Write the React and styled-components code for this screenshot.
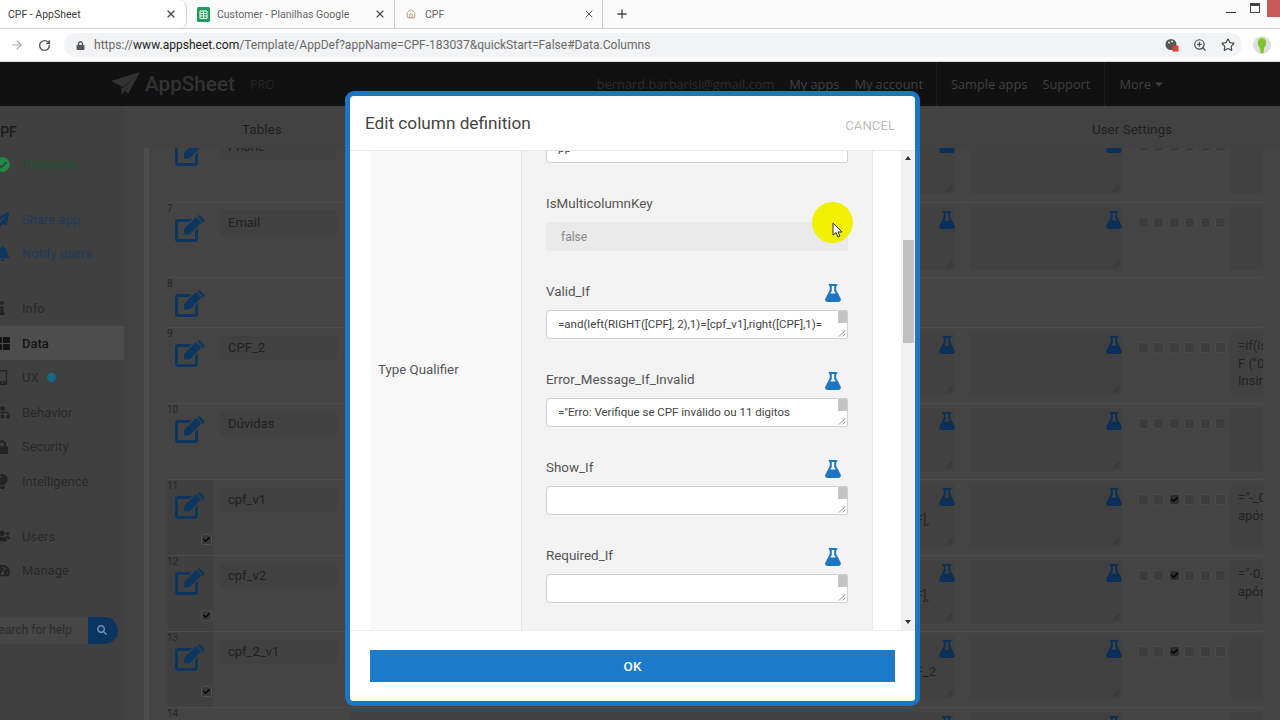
import React from 'react';
import styled, { createGlobalStyle } from 'styled-components';
import { ArrowRight, RotateCw, Star, ZoomIn, Home, X, Plus } from 'lucide-react';
import {
  FaCheckCircle, FaPaperPlane, FaBell, FaInfo, FaThLarge, FaMobileAlt, FaSitemap,
  FaLock, FaLightbulb, FaUsers, FaTachometerAlt, FaSearch, FaCheck, FaCaretDown,
} from 'react-icons/fa';

const Global = createGlobalStyle`
  html, body { margin: 0; padding: 0; background: #424242; }
  * { box-sizing: border-box; }
  body { font-family: Roboto, "Liberation Sans", sans-serif; }
`;

const Screen = styled.div`
  position: relative;
  width: 1280px;
  height: 720px;
  overflow: hidden;
  display: flex;
  flex-direction: column;
  background: #424242;
`;

/* Browser chrome */
const TabStrip = styled.div`
  height: 29px;
  display: flex;
  align-items: stretch;
  background: #fbfbfb;
  border-bottom: 1px solid #cfcfcf;
  flex: none;
`;
const Tab = styled.div`
  width: ${p => p.$width}px;
  display: flex;
  align-items: center;
  gap: ${p => p.$gap || 7}px;
  padding: 0 ${p => p.$padRight}px 0 ${p => p.$padLeft}px;
  font-size: 10.5px;
  color: ${p => (p.$active ? '#3c3c3c' : '#666')};
  position: relative;
  background: ${p => (p.$active ? '#fff' : 'transparent')};
  border-right: 1px solid ${p => (p.$active ? '#cfcfcf' : '#c8c8c8')};
  border-bottom-right-radius: ${p => (p.$active ? '6px' : '0')};
  border-top-right-radius: ${p => (p.$active ? '8px' : '0')};
`;
const TabTitle = styled.span`
  flex: 1;
  white-space: nowrap;
`;
const NewTab = styled.div`
  display: flex;
  align-items: center;
  margin-left: 12px;
  color: #444;
`;
const WindowControls = styled.div`
  margin-left: auto;
  display: flex;
  align-items: flex-start;
`;
const WinMin = styled.span`
  width: 10px;
  height: 1px;
  margin: 12px 14px 0 0;
  background: #333;
`;
const WinRestore = styled.span`
  width: 10px;
  height: 10px;
  margin: 3px 7px 0 0;
  border: 1px solid #444;
  border-top-width: 3px;
  background: #fff;
`;
const WinClose = styled.span`
  width: 13px;
  height: 17px;
  background: #c9585a;
`;

const AddressBar = styled.div`
  height: 33px;
  display: flex;
  align-items: center;
  background: #fff;
  border-bottom: 1px solid #d8d8d8;
  flex: none;
  padding-left: 10px;
  color: #666;
`;
const ReloadBox = styled.span`
  display: flex;
  margin: 0 13px 0 14px;
  color: #555;
`;
const Omnibox = styled.div`
  width: 1178px;
  height: 24px;
  display: flex;
  align-items: center;
  border-radius: 12px;
  background: #f1f3f4;
  padding: 0 7px 0 12px;
  color: #555;
`;
const Url = styled.span`
  margin-left: 9px;
  font-size: 12.05px;
  color: #6a6a6a;
  white-space: nowrap;
  flex: 1;
  b { font-weight: 400; color: #222; }
`;
const OmniIcons = styled.div`
  display: flex;
  align-items: center;
  gap: 14px;
  color: #444;
`;
const Avatar = styled.svg`
  margin-left: 11px;
  flex: none;
`;

/* App shell */
const TopBar = styled.header`
  height: 44px;
  flex: none;
  display: flex;
  align-items: center;
  background: #111;
  padding-left: 111px;
  font-family: "Open Sans", sans-serif;
  font-size: 12.8px;
  color: #3c3c3c;
`;
const Brand = styled.span`
  font-family: Roboto, sans-serif;
  font-size: 20.7px;
  font-weight: 500;
  color: #333;
  margin-left: 5px;
`;
const Pro = styled.span`
  font-size: 12.5px;
  color: #262626;
  margin-left: 15px;
  margin-right: 322px;
`;
const NavLink = styled.span`
  margin-left: ${p => p.$gap ?? 15}px;
  white-space: nowrap;
  color: ${p => (p.$light ? '#2c2c2c' : '#414141')};
`;
const NavGroup = styled.div`
  height: 100%;
  display: flex;
  align-items: center;
  padding: 0 14px;
  margin-left: ${p => p.$offset ?? 13}px;
  border-left: 1px solid #1e1e1e;
`;
const Caret = styled.span`
  display: inline-flex;
  vertical-align: -1px;
  margin-left: 2px;
`;

const Body = styled.div`
  flex: 1;
  min-height: 0;
  display: flex;
`;
const Sidebar = styled.nav`
  width: 124px;
  flex: none;
  background: #404040;
  overflow: hidden;
  font-size: 13px;
`;
const AppName = styled.div`
  height: 50px;
  margin-left: -9px;
  display: flex;
  align-items: center;
  font-size: 14px;
  font-weight: 500;
  color: #1c1c1c;
  padding-top: 1px;
`;
const SideItem = styled.div`
  height: ${p => p.$h || 34.6}px;
  display: flex;
  align-items: center;
  margin-bottom: ${p => p.$after || 0}px;
  padding-left: 22px;
  position: relative;
  color: ${p => p.$color || '#282828'};
  background: ${p => (p.$active ? '#4d4d4d' : 'transparent')};
  font-weight: ${p => (p.$active ? 500 : 400)};
`;
const SideIcon = styled.span`
  position: absolute;
  left: -8px;
  width: 20px;
  display: flex;
  justify-content: center;
  color: ${p => p.$color || '#232323'};
`;
const Dot = styled.span`
  width: 9px;
  height: 9px;
  border-radius: 50%;
  background: #14688c;
  margin-left: 8px;
`;
const SearchBox = styled.div`
  height: 27px;
  width: 118px;
  margin-top: 29px;
  display: flex;
  align-items: stretch;
  border-radius: 0 14px 14px 0;
  overflow: hidden;
  background: #464646;
`;
const SearchText = styled.span`
  flex: 1;
  min-width: 0;
  font-size: 12px;
  line-height: 27px;
  color: #2b2b2b;
  white-space: nowrap;
  overflow: hidden;
  display: flex;
  justify-content: flex-end;
  padding-right: 16px;
`;
const SearchBtn = styled.span`
  width: 30px;
  flex: none;
  background: #0a3560;
  color: #6d8db0;
  display: flex;
  align-items: center;
  padding-left: 9px;
`;

const Main = styled.main`
  flex: 1;
  min-width: 0;
  display: flex;
  flex-direction: column;
`;
const ColumnHeads = styled.div`
  height: 42px;
  flex: none;
  display: flex;
  align-items: center;
  justify-content: space-between;
  padding: 8px 108px 4px 118px;
  font-size: 13.5px;
  color: #1f1f1f;
`;
const Panel = styled.div`
  flex: 1;
  min-height: 0;
  overflow: hidden;
  margin-left: 20px;
  padding-left: 18px;
  border-left: 5px solid #4d4d4d;
  background: #444;
`;
const RowList = styled.div`
  width: 1096px;
  margin-top: -22px;
`;
const Row = styled.div`
  height: ${p => p.$h}px;
  display: grid;
  grid-template-columns: 53px 117px 618px 15px 152px 108px 33px;
  align-items: start;
  border-top: 1px solid #4b4b4b;
`;
const IndexCell = styled.div`
  width: 46px;
  height: 100%;
  padding-top: 1px;
  background: ${p => (p.$selected ? '#404040' : 'transparent')};
  font-size: 10px;
  line-height: 10px;
  color: #262626;
  display: flex;
  flex-direction: column;
`;
const EditGlyph = styled.svg`
  margin: 1px 0 0 8px;
  color: #0c3560;
  flex: none;
`;
const RowCheck = styled.span`
  width: 11px;
  height: 11px;
  margin: 15px 0 0 34px;
  border-radius: 2px;
  background: #3a3a3a;
  border: 1px solid #505050;
  color: #000;
  display: flex;
  align-items: center;
  justify-content: center;
`;
const NameField = styled.div`
  height: 25px;
  margin-top: 7px;
  padding-left: 8px;
  border-radius: 3px;
  background: #414141;
  font-size: 13px;
  line-height: 25px;
  color: #202020;
`;
const Formula = styled.div`
  position: relative;
  height: 63px;
  margin: 4px 0 0 13px;
  padding: 27px ${p => p.$trail ?? 26}px 0 0;
  background: #414141;
  text-align: right;
  font-size: 13px;
  line-height: 17px;
  color: #222;
`;
const ScrollPad = styled.div`
  position: relative;
  height: 63px;
  margin-top: 4px;
  background: #414141;
`;
const FlaskSpot = styled.span`
  position: absolute;
  top: 4px;
  right: 0;
  display: flex;
  color: #0a3058;
`;
const Grip = styled.svg`
  position: absolute;
  right: 2px;
  bottom: 2px;
  color: #2c2c2c;
`;
const Checks = styled.div`
  display: flex;
  gap: 4.4px;
  margin-top: 14px;
  padding-left: 16px;
`;
const Box = styled.span`
  width: 11px;
  height: 11px;
  border-radius: 3px;
  background: ${p => (p.$on ? '#2c2c2c' : '#3c3c3c')};
  border: 1px solid #4a4a4a;
  color: #000;
  display: flex;
  align-items: center;
  justify-content: center;
`;
const InitCell = styled.div`
  height: 63px;
  margin-top: 4px;
  padding: 5px 0 0 8px;
  background: #414141;
  font-size: 13px;
  line-height: 17.5px;
  color: #222;
  overflow: hidden;
  white-space: nowrap;
`;

/* Modal */
const Modal = styled.section`
  position: absolute;
  left: 345px;
  top: 91px;
  width: 575px;
  height: 615px;
  background: #fff;
  border: 5px solid #1c75c5;
  border-radius: 9px;
  display: flex;
  flex-direction: column;
  overflow: hidden;
`;
const ModalHead = styled.div`
  height: 55px;
  flex: none;
  display: flex;
  align-items: center;
  justify-content: space-between;
  padding: 0 20px 0 15px;
  border-bottom: 1px solid #e6e6e6;
`;
const ModalTitle = styled.h2`
  margin: 0;
  font-size: 17.2px;
  font-weight: 400;
  color: #444;
`;
const Cancel = styled.span`
  font-size: 13.2px;
  color: #bdbdbd;
  padding-top: 4px;
`;
const ModalBody = styled.div`
  flex: 1;
  min-height: 0;
  display: grid;
  grid-template-columns: 21px 150px 352px 28px 14px;
`;
const Blank = styled.div`
  background: #fff;
`;
const LabelCol = styled.div`
  background: #f8f8f8;
  display: flex;
  align-items: center;
  padding: 0 0 42px 7px;
  font-size: 13.3px;
  color: #555;
`;
const FormCol = styled.div`
  background: #f3f3f3;
  border-left: 1px solid #e7e7e7;
  border-right: 1px solid #e7e7e7;
  overflow: hidden;
  padding: 0 24px;
`;
const FieldStack = styled.div`
  margin-top: -17px;
  display: flex;
  flex-direction: column;
  gap: 30px;
`;
const Field = styled.div`
  display: flex;
  flex-direction: column;
  gap: 9px;
`;
const FieldLabel = styled.div`
  height: 20px;
  display: flex;
  align-items: center;
  justify-content: space-between;
  padding-right: 7px;
  font-size: 13.4px;
  color: #555;
`;
const TestFlask = styled.span`
  display: flex;
  color: #1c75c5;
  margin-top: 4px;
`;
const InputBox = styled.div`
  position: relative;
  height: 29px;
  border-radius: 4px ${p => (p.$disabled ? 0 : 2)}px ${p => (p.$disabled ? 0 : 2)}px 4px;
  border: 1px solid ${p => (p.$disabled ? 'transparent' : '#cfcfcf')};
  background: ${p => (p.$disabled ? '#eaeaea' : '#fff')};
  padding-left: ${p => (p.$disabled ? 14 : 11)}px;
  font-size: ${p => (p.$disabled ? 12 : 11.5)}px;
  line-height: ${p => (p.$disabled ? 29 : 27)}px;
  color: ${p => (p.$disabled ? '#888' : '#444')};
  white-space: nowrap;
  overflow: hidden;
`;
const BoxScroll = styled.span`
  position: absolute;
  top: 0;
  right: 0;
  width: 9px;
  height: 12px;
  background: #c4c4c4;
`;
const BoxGrip = styled.svg`
  position: absolute;
  right: 1px;
  bottom: 1px;
  color: #777;
`;
const Track = styled.div`
  background: #f1f1f1;
  display: flex;
  flex-direction: column;
  align-items: center;
  padding-top: 5px;
`;
const ArrowUp = styled.span`
  width: 0;
  height: 0;
  border-left: 3.5px solid transparent;
  border-right: 3.5px solid transparent;
  border-bottom: 4px solid #333;
`;
const ArrowDown = styled.span`
  width: 0;
  height: 0;
  margin-top: auto;
  margin-bottom: 6px;
  border-left: 3.5px solid transparent;
  border-right: 3.5px solid transparent;
  border-top: 4px solid #333;
`;
const Thumb = styled.span`
  width: 11px;
  height: 103px;
  margin-top: 80px;
  background: #c1c1c1;
`;
const ModalFoot = styled.div`
  height: 71px;
  flex: none;
  padding: 19px 20px;
  border-top: 1px solid #ececec;
  background: #fff;
`;
const OkButton = styled.div`
  height: 32px;
  background: #1c7acb;
  color: #fff;
  font-size: 13.5px;
  font-weight: 500;
  display: flex;
  align-items: center;
  justify-content: center;
`;
const Highlight = styled.div`
  position: absolute;
  left: 812px;
  top: 202px;
  width: 41px;
  height: 41px;
  border-radius: 50%;
  background: #f0f000;
`;
const Pointer = styled.svg`
  position: absolute;
  left: 20px;
  top: 20px;
`;

const Flask = () => (
  <svg width="16" height="18" viewBox="0 0 16 18" fill="currentColor">
    <path fillRule="evenodd" d="M3.800 0h8.400v1.900h-1v4.200l4.400 8.400c.7 1.500-.2 3.500-2 3.500H2.400c-1.800 0-2.700-2-2-3.500l4.400-8.400V1.900h-1zM6.800 1.900v4.900L5.300 9.600h5.400L9.200 6.800V1.900z" />
  </svg>
);
const EditIcon = () => (
  <EditGlyph width="30" height="27" viewBox="0 0 30 27" fill="currentColor">
    <path d="M3 4H17L14 7H3V24H20V16L23 13V24Q23 27 20 27H3Q0 27 0 24V7Q0 4 3 4z" />
    <path d="M9 14 21 2 26.500 7.500 14.500 19.500H9z" />
    <path d="M22.500 1Q24-.5 25.500 1L29 4.500Q30 6 28.500 7.500L28 8z" />
  </EditGlyph>
);
const gripProps = { width: 8, height: 8, viewBox: '0 0 8 8', stroke: 'currentColor', strokeWidth: 0.8, fill: 'none' };
const gripLines = <path d="M1 7.500 7.500 1M4.500 7.500 7.500 4.500" />;

const rows = [
  { n: '', name: 'Phone', h: 76, panels: true },
  { n: 7, name: 'Email', h: 75, panels: true },
  { n: 8, h: 50 },
  { n: 9, name: 'CPF_2', h: 76, panels: true, init: ['=if(isblank', 'F ("0', 'Insira'] },
  { n: 10, name: 'Dúvidas', h: 76, panels: true },
  { n: 11, name: 'cpf_v1', h: 76, panels: true, selected: true, formula: '[CPF],', on: 2, init: ['="-_0', 'após'] },
  { n: 12, name: 'cpf_v2', h: 76, panels: true, selected: true, formula: '[CPF],', on: 2, init: ['="-0_', 'após'] },
  { n: 13, name: 'cpf_2_v1', h: 76, panels: true, selected: true, formula: 'CPF_2', trail: 19, on: 2 },
  { n: 14, h: 76, panels: true },
];

const fields = [
  { label: 'IsMulticolumnKey', value: 'false', disabled: true },
  { label: 'Valid_If', value: '=and(left(RIGHT([CPF], 2),1)=[cpf_v1],right([CPF],1)=' },
  { label: 'Error_Message_If_Invalid', value: '="Erro: Verifique se CPF inválido ou 11 digitos' },
  { label: 'Show_If', value: '' },
  { label: 'Required_If', value: '' },
];

const sideItems = [
  { t: 'Share app', I: FaPaperPlane, color: '#1f3a58', ic: '#0c3560', s: 14 },
  { t: 'Notify users', I: FaBell, color: '#1f3a58', ic: '#0c3560', s: 15, after: 20 },
  { t: 'Info', I: FaInfo, s: 14 },
  { t: 'Data', I: FaThLarge, active: true, color: '#141414', ic: '#141414', s: 15 },
  { t: 'UX', I: FaMobileAlt, dot: true, s: 15 },
  { t: 'Behavior', I: FaSitemap, s: 15 },
  { t: 'Security', I: FaLock, s: 14 },
  { t: 'Intelligence', I: FaLightbulb, s: 15, after: 20 },
  { t: 'Users', I: FaUsers, s: 16 },
  { t: 'Manage', I: FaTachometerAlt, s: 15 },
];

function ColumnRow({ r }) {
  return (
    <Row $h={r.h}>
      <IndexCell $selected={r.selected}>
        {r.n || '\u00a0'}
        <EditIcon />
        {r.selected && <RowCheck><FaCheck size={7} /></RowCheck>}
      </IndexCell>
      {r.panels ? (
        <>
          {r.name ? <NameField>{r.name}</NameField> : <span />}
          <Formula $trail={r.trail}>
            {r.formula}
            <FlaskSpot><Flask /></FlaskSpot>
            <Grip {...gripProps}>{gripLines}</Grip>
          </Formula>
          <span />
          <ScrollPad>
            <FlaskSpot><Flask /></FlaskSpot>
            <Grip {...gripProps}>{gripLines}</Grip>
          </ScrollPad>
          <Checks>
            {[0, 1, 2, 3, 4, 5].map(i => (
              <Box key={i} $on={r.on === i}>{r.on === i && <FaCheck size={7} />}</Box>
            ))}
          </Checks>
          <InitCell>{(r.init || []).map(l => <div key={l}>{l}</div>)}</InitCell>
        </>
      ) : null}
    </Row>
  );
}

export default function App() {
  return (
    <Screen>
      <Global />
      <TabStrip>
        <Tab $active $width={187} $padLeft={8} $padRight={9}>
          <TabTitle>CPF - AppSheet</TabTitle>
          <X size={12} color="#444" strokeWidth={2.4} />
        </Tab>
        <Tab $width={208} $padLeft={10} $padRight={8}>
          <svg width="13" height="15" viewBox="0 0 13 15">
            <rect width="13" height="15" rx="1.5" fill="#1f9d5b" />
            <path d="M3 4h7v7.500H3zM3 6.500h7M3 9h7M6.500 4v7.500" fill="none" stroke="#fff" strokeWidth="1" />
          </svg>
          <TabTitle>Customer - Planilhas Google</TabTitle>
          <X size={12} color="#444" strokeWidth={2.2} />
        </Tab>
        <Tab $width={208} $padLeft={11} $padRight={7} $gap={9}>
          <Home size={10} color="#a58a5e" />
          <TabTitle>CPF</TabTitle>
          <X size={12} color="#555" strokeWidth={2} />
        </Tab>
        <NewTab><Plus size={14} strokeWidth={2.2} /></NewTab>
        <WindowControls>
          <WinMin />
          <WinRestore />
          <WinClose />
        </WindowControls>
      </TabStrip>
      <AddressBar>
        <ArrowRight size={14} color="#a8a8a8" />
        <ReloadBox><RotateCw size={13} strokeWidth={2.6} /></ReloadBox>
        <Omnibox>
          <FaLock size={9} color="#555" />
          <Url>https://<b>www.appsheet.com</b>/Template/AppDef?appName=CPF-183037&amp;quickStart=False#Data.Columns</Url>
          <OmniIcons>
            <svg width="14" height="14" viewBox="0 0 14 14">
              <circle cx="6" cy="6.500" r="5.500" fill="#555" />
              <circle cx="4" cy="4.500" r="1" fill="#eee" />
              <circle cx="7" cy="3.500" r="1" fill="#eee" />
              <rect x="7.500" y="7.500" width="6" height="6" fill="#d9423a" />
            </svg>
            <ZoomIn size={14} />
            <Star size={14} />
          </OmniIcons>
        </Omnibox>
        <Avatar width="18" height="18" viewBox="0 0 18 18">
          <circle cx="9" cy="9" r="9" fill="#dedede" />
          <path d="M9 2c3 0 4.500 3 4 6-.4 2-1.500 3-2 4l-.5 5h-3l-.5-5c-.6-1-1.700-2-2-4C4.500 5 6 2 9 2z" fill="#7ec42d" />
        </Avatar>
      </AddressBar>
      <TopBar>
        <svg width="29" height="24" viewBox="0 0 29 24" fill="#333">
          <path d="M0 9 29 0 12 15zM29 0 17 22 12 16zM10 15l1 8 3-5z" />
        </svg>
        <Brand>AppSheet</Brand>
        <Pro>PRO</Pro>
        <NavLink $gap={0} $light>bernard.barbarisi@gmail.com</NavLink>
        <NavLink>My apps</NavLink>
        <NavLink>My account</NavLink>
        <NavGroup>
          <NavLink $gap={0}>Sample apps</NavLink>
          <NavLink>Support</NavLink>
        </NavGroup>
        <NavGroup $offset={0}>
          <NavLink $gap={0}>More<Caret><FaCaretDown size={12} /></Caret></NavLink>
        </NavGroup>
      </TopBar>
      <Body>
        <Sidebar>
          <AppName>CPF</AppName>
          <SideItem $h={16} $after={30} $color="#1d5230">
            <SideIcon $color="#1f8a44"><FaCheckCircle size={15} /></SideIcon>
            Deployed
          </SideItem>
          {sideItems.map(s => (
            <SideItem key={s.t} $color={s.color} $active={s.active} $after={s.after}>
              <SideIcon $color={s.ic}><s.I size={s.s} /></SideIcon>
              {s.t}
              {s.dot && <Dot />}
            </SideItem>
          ))}
          <SearchBox>
            <SearchText>Search for help</SearchText>
            <SearchBtn><FaSearch size={10} /></SearchBtn>
          </SearchBox>
        </Sidebar>
        <Main>
          <ColumnHeads>
            <span>Tables</span>
            <span>User Settings</span>
          </ColumnHeads>
          <Panel>
            <RowList>
              {rows.map((r, i) => <ColumnRow key={i} r={r} />)}
            </RowList>
          </Panel>
        </Main>
      </Body>
      <Modal>
        <ModalHead>
          <ModalTitle>Edit column definition</ModalTitle>
          <Cancel>CANCEL</Cancel>
        </ModalHead>
        <ModalBody>
          <Blank />
          <LabelCol>Type Qualifier</LabelCol>
          <FormCol>
            <FieldStack>
              <InputBox>pp</InputBox>
              {fields.map(f => (
                <Field key={f.label}>
                  <FieldLabel>
                    {f.label}
                    {!f.disabled && <TestFlask><Flask /></TestFlask>}
                  </FieldLabel>
                  <InputBox $disabled={f.disabled}>
                    {f.value}
                    {!f.disabled && <BoxScroll />}
                    {!f.disabled && <BoxGrip {...gripProps}>{gripLines}</BoxGrip>}
                  </InputBox>
                </Field>
              ))}
            </FieldStack>
          </FormCol>
          <Blank />
          <Track>
            <ArrowUp />
            <Thumb />
            <ArrowDown />
          </Track>
        </ModalBody>
        <ModalFoot>
          <OkButton>OK</OkButton>
        </ModalFoot>
      </Modal>
      <Highlight>
        <Pointer width="11" height="17" viewBox="0 0 11 17">
          <path d="M1 1v12l3-2.500L6 15l2-1-2-4h4z" fill="#fff" stroke="#333" strokeWidth="1" />
        </Pointer>
      </Highlight>
    </Screen>
  );
}
